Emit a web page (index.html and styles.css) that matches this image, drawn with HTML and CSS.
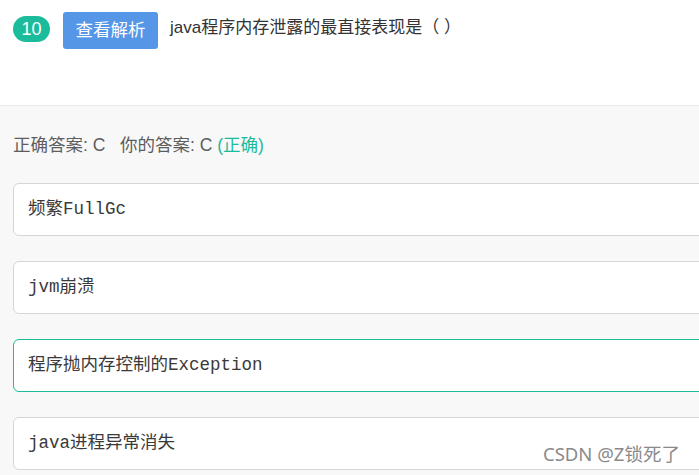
FILE: index.html
```html
<!DOCTYPE html>
<html lang="zh-CN">
<head>
<meta charset="utf-8">
<title>题目 10</title>
<link rel="stylesheet" href="styles.css">
</head>
<body>
<div class="page">
  <header class="question">
    <span class="num">10</span>
    <button class="analysis">查看解析</button>
    <span class="title">java程序内存泄露的最直接表现是（ ）</span>
  </header>
  <section class="answers">
    <p class="result">正确答案: C &nbsp; 你的答案: C <span class="ok">(正确)</span></p>
    <div class="option">频繁FullGc</div>
    <div class="option">jvm崩溃</div>
    <div class="option correct">程序抛内存控制的Exception</div>
    <div class="option">java进程异常消失</div>
  </section>
  <div class="watermark">CSDN @Z锁死了</div>
</div>
</body>
</html>
```
FILE: styles.css
```css
html, body {
  margin: 0;
  padding: 0;
  overflow: hidden;
  background: #f8f8f8;
}
.page {
  position: relative;
  width: 699px;
  height: 475px;
  overflow: hidden;
  font-family: "Liberation Sans", "Noto Sans CJK SC", sans-serif;
}
.question {
  box-sizing: border-box;
  height: 106px;
  background: #fff;
  border-bottom: 1px solid #e9e9e9;
  display: flex;
  align-items: flex-start;
  padding: 12px 0 0 13px;
}
.num {
  margin-top: 4px;
  width: 37px;
  height: 26px;
  border-radius: 13px;
  background: #1abc9c;
  color: #fff;
  font-size: 18px;
  line-height: 26px;
  text-align: center;
}
.analysis {
  margin-left: 13px;
  width: 95px;
  height: 37px;
  border: none;
  border-radius: 3px;
  background: #5596e6;
  color: #fff;
  font-family: inherit;
  font-size: 17.5px;
  padding: 0;
  line-height: 37px;
}
.title {
  margin-left: 12px;
  color: #333;
  font-size: 17px;
  line-height: 32px;
}
.answers {
  padding: 0 0 0 13px;
}
.result {
  margin: 0;
  height: 77px;
  line-height: 78px;
  color: #5d5d5d;
  font-size: 17.5px;
}
.ok {
  color: #1abc9c;
}
.option {
  box-sizing: border-box;
  width: 760px;
  height: 53px;
  margin-bottom: 25px;
  background: #fff;
  border: 1px solid #d6d6d6;
  border-radius: 6px;
  padding-left: 14px;
  line-height: 51px;
  font-family: "Liberation Mono", "Noto Sans CJK SC", monospace;
  font-size: 17.5px;
  color: #3a3a3a;
}
.option.correct {
  border-color: #1abc9c;
}
.watermark {
  position: absolute;
  left: 543px;
  top: 440px;
  font-family: "Noto Sans", "Noto Sans CJK SC", sans-serif;
  font-size: 18.5px;
  color: #8a8a8a;
  text-shadow: 0 0 1px #fff;
}
```
